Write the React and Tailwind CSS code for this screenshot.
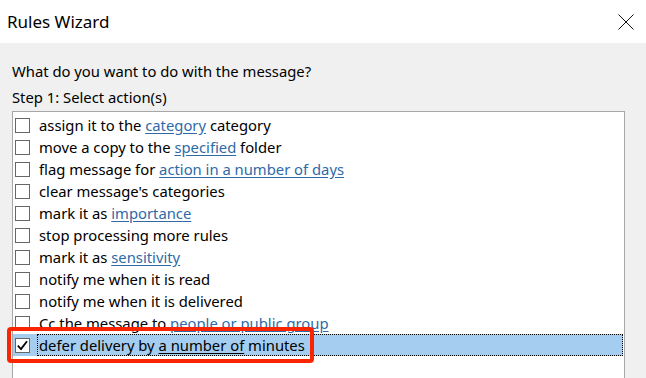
import React from 'react';

const font = { fontFamily: '"Noto Sans", "Open Sans", sans-serif' };

const actions = [
  ['assign it to the ', 'category', ' category'],
  ['move a copy to the ', 'specified', ' folder'],
  ['flag message for ', 'action in a number of days', ''],
  ["clear message's categories", null, ''],
  ['mark it as ', 'importance', ''],
  ['stop processing more rules', null, ''],
  ['mark it as ', 'sensitivity', ''],
  ['notify me when it is read', null, ''],
  ['notify me when it is delivered', null, ''],
  ['Cc the message to ', 'people or public group', ''],
];

function Checkbox({ checked }) {
  return (
    <div className="w-[15px] h-[15px] border border-[#666666] bg-white flex items-center justify-center shrink-0">
      {checked && (
        <svg width="13" height="13" viewBox="0 0 13 13">
          <path d="M1.8 6.6 L5 10 L11 2.2" fill="none" stroke="#000" strokeWidth="1.8" />
        </svg>
      )}
    </div>
  );
}

function Row({ parts }) {
  const [pre, link, post] = parts;
  return (
    <div className="h-[22px] flex items-center pl-[2px]">
      <Checkbox />
      <span className="ml-[9px] text-[14.8px] text-black whitespace-nowrap leading-none">
        {pre}
        {link && <span className="text-[#2e6aa8] underline underline-offset-2">{link}</span>}
        {post}
      </span>
    </div>
  );
}

export default function App() {
  return (
    <div className="w-[646px] h-[378px] overflow-hidden bg-[#f0f0f0] flex flex-col relative" style={font}>
      <div className="h-[43px] bg-white flex items-center justify-between pl-[7px] pr-[12px] shrink-0">
        <span className="text-[17px] text-black">Rules Wizard</span>
        <svg width="16" height="16" viewBox="0 0 16 16">
          <path d="M0.5 0.5 L15.5 15.5 M15.5 0.5 L0.5 15.5" stroke="#111" strokeWidth="1" />
        </svg>
      </div>
      <div className="flex-1 flex flex-col pl-[12px] pr-[21px]">
        <div className="text-[14.8px] text-black mt-[18px] leading-[20px]">What do you want to do with the message?</div>
        <div className="text-[14.8px] text-black mt-[6px] leading-[20px]">Step 1: Select action(s)</div>
        <div className="flex-1 bg-white border border-b-0 border-[#a7a7a7] mt-[4px] pt-[2px] pr-[1px]">
          {actions.map((a, i) => (
            <Row key={i} parts={a} />
          ))}
          <div className="h-[22px] flex items-center bg-[#a5cdf0]">
            <div className="pl-[2px] flex items-center">
              <Checkbox checked />
            </div>
            <div className="ml-[7px] flex-1 h-full flex items-center border border-dotted border-black pl-[1px]">
              <span className="text-[14.8px] text-black whitespace-nowrap leading-none">
                defer delivery by <span className="underline underline-offset-2">a number of</span> minutes
              </span>
            </div>
          </div>
        </div>
      </div>
      <div className="absolute left-[7px] top-[327px] w-[307px] h-[36px] border-[4px] border-[#fb2400] rounded-[4px]"></div>
    </div>
  );
}
